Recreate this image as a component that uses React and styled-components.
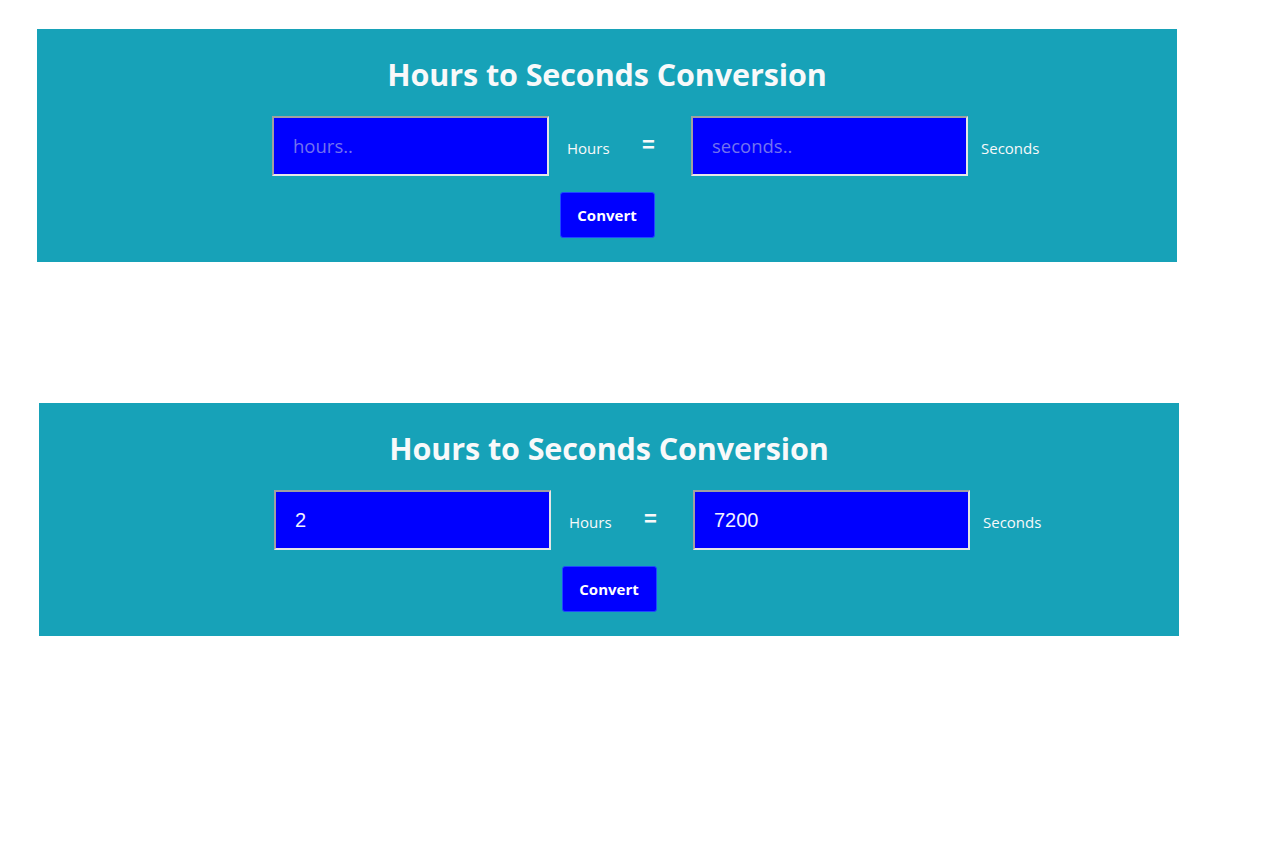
import React, { useState } from "react";
import styled, { createGlobalStyle } from "styled-components";

const Global = createGlobalStyle`
  html, body { margin: 0; padding: 0; background: #ffffff; }
  body { font-family: "Open Sans", "Noto Sans", sans-serif; }
`;

const Page = styled.div`
  display: flex;
  flex-direction: column;
  padding-top: 29px;
  gap: 141px;
`;

const Panel = styled.section`
  width: 1140px;
  height: 233px;
  box-sizing: border-box;
  margin-left: ${(p) => p.$left}px;
  background: #17a2b8;
  display: flex;
  flex-direction: column;
  align-items: center;
  padding-top: 24px;
`;

const Title = styled.h1`
  margin: 0;
  font-family: "Open Sans", sans-serif;
  font-weight: 700;
  font-size: 30.5px;
  line-height: 42px;
  letter-spacing: -0.1px;
  color: #f8f9fa;
`;

const Row = styled.div`
  align-self: stretch;
  display: flex;
  align-items: center;
  margin-top: 21px;
  padding-left: 235px;
  height: 60px;
`;

const Field = styled.input`
  box-sizing: border-box;
  width: 277px;
  height: 60px;
  margin: 0;
  padding: 0 0 0 19px;
  background: #0000ff;
  border: 2px solid #d0d0d0;
  border-top-color: #a0a0a0;
  border-left-color: #a0a0a0;
  border-bottom-color: #e6e6e6;
  border-right-color: #e6e6e6;
  color: #f2f2ff;
  font-family: "Liberation Sans", Arial, sans-serif;
  font-size: 20px;
  outline: none;
  &::placeholder {
    font-family: "Open Sans", sans-serif;
    font-size: 18.5px;
    color: #7272f0;
  }
`;

const Unit = styled.span`
  box-sizing: border-box;
  width: ${(p) => p.$width}px;
  padding-left: ${(p) => p.$pad}px;
  padding-top: 3px;
  font-size: 15px;
  color: #f8f9fa;
  white-space: nowrap;
`;

const Equals = styled.span`
  box-sizing: border-box;
  width: 49px;
  font-family: "Liberation Sans", Arial, sans-serif;
  font-size: 22px;
  font-weight: 700;
  color: #f8f9fa;
  line-height: 1;
  padding-bottom: 3px;
`;

const Button = styled.button`
  margin-top: 16px;
  width: 95px;
  height: 46px;
  box-sizing: border-box;
  background: #0000ff;
  border: 1px solid #1f49ff;
  border-radius: 3px;
  color: #ffffff;
  font-family: "Open Sans", sans-serif;
  font-weight: 700;
  font-size: 15px;
  cursor: pointer;
`;

function Converter({ left, initial }) {
  const [hours, setHours] = useState(initial);
  const [secs, setSecs] = useState(initial ? String(Number(initial) * 3600) : "");
  return (
    <Panel $left={left}>
      <Title>Hours to Seconds Conversion</Title>
      <Row>
        <Field placeholder="hours.." value={hours} onChange={(e) => setHours(e.target.value)} />
        <Unit $width={93} $pad={18}>Hours</Unit>
        <Equals>=</Equals>
        <Field placeholder="seconds.." value={secs} onChange={(e) => setSecs(e.target.value)} />
        <Unit $width={80} $pad={13}>Seconds</Unit>
      </Row>
      <Button onClick={() => setSecs(hours === "" ? "" : String(Number(hours) * 3600))}>Convert</Button>
    </Panel>
  );
}

export default function App() {
  return (
    <>
      <Global />
      <Page>
        <Converter left={37} initial="" />
        <Converter left={39} initial="2" />
      </Page>
    </>
  );
}
